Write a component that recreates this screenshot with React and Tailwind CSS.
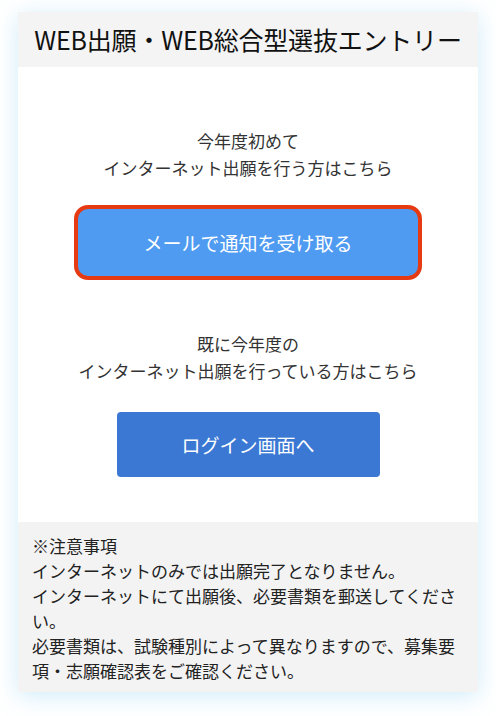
export default function App() {
  return (
    <div
      className="min-h-[716px] bg-white pt-[12px] pl-[18px]"
      style={{ fontFamily: '"Noto Sans CJK JP", "Noto Sans", sans-serif' }}
    >
      <div className="w-[460px] bg-white shadow-[0_4px_22px_rgba(120,200,240,0.35)]">
        {/* header */}
        <div className="flex h-[55px] items-center justify-center bg-[#f4f4f4]">
          <h1 className="text-[25px] leading-none tracking-[-0.2px] text-[#111]">
            WEB出願・WEB総合型選抜エントリー
          </h1>
        </div>

        {/* entry actions */}
        <div className="flex flex-col items-center pt-[60px] pb-[45px] text-center text-[17px] leading-[27px] text-[#333]">
          <p>
            今年度初めて
            <br />
            インターネット出願を行う方はこちら
          </p>
          <button
            type="button"
            className="mt-[24px] flex h-[75px] w-[348px] items-center justify-center rounded-[14px] border-[4px] border-[#e63b12] bg-[#4f9bf1] text-[19px] text-white"
          >
            メールで通知を受け取る
          </button>

          <p className="mt-[50px]">
            既に今年度の
            <br />
            インターネット出願を行っている方はこちら
          </p>
          <button
            type="button"
            className="mt-[28px] flex h-[65px] w-[263px] items-center justify-center rounded-[4px] bg-[#3a78d3] text-[19px] text-white"
          >
            ログイン画面へ
          </button>
        </div>

        {/* notes */}
        <div className="bg-[#f3f3f3] px-[14px] pt-[11px] pb-[9px] text-[17px] leading-[25px] text-[#222]">
          <p>※注意事項</p>
          <p>インターネットのみでは出願完了となりません。</p>
          <p>インターネットにて出願後、必要書類を郵送してください。</p>
          <p>必要書類は、試験種別によって異なりますので、募集要項・志願確認表をご確認ください。</p>
        </div>
      </div>
    </div>
  );
}
